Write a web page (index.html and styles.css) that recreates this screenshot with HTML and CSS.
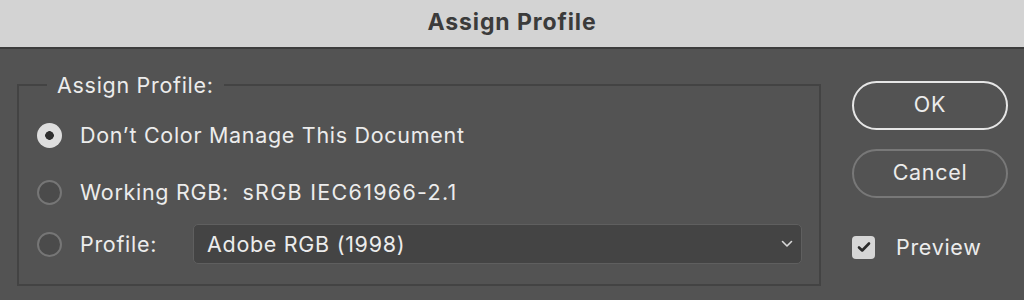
FILE: index.html
```html
<!DOCTYPE html>
<html>
<head>
<meta charset="utf-8">
<link rel="stylesheet" href="styles.css">
</head>
<body>
<div class="titlebar">Assign Profile</div>
<div class="main">
  <fieldset class="group">
    <legend class="legend">Assign Profile:</legend>
    <div class="row row1">
      <span class="radio checked"></span>
      <span class="label">Don’t Color Manage This Document</span>
    </div>
    <div class="row row2">
      <span class="radio"></span>
      <span class="label">Working RGB:&nbsp; <span class="wide">sRGB IEC61966-2.1</span></span>
    </div>
    <div class="row row3">
      <span class="radio"></span>
      <span class="label profile-label">Profile:</span>
      <div class="select">
        <span class="select-text">Adobe RGB (1998)</span>
        <svg class="chev" width="12" height="8" viewBox="0 0 12 8"><path d="M1.5 1.5 L6 6 L10.5 1.5" fill="none" stroke="#d8d8d8" stroke-width="1.6" stroke-linecap="round" stroke-linejoin="round"/></svg>
      </div>
    </div>
  </fieldset>
  <div class="side">
    <div class="btn btn-ok">OK</div>
    <div class="btn btn-cancel">Cancel</div>
    <div class="check-row">
      <span class="checkbox"><svg width="14" height="12" viewBox="0 0 14 12"><path d="M2 6.5 L5.2 9.5 L12 2.5" fill="none" stroke="#2a2a2a" stroke-width="2.6" stroke-linecap="round" stroke-linejoin="round"/></svg></span>
      <span class="label">Preview</span>
    </div>
  </div>
</div>
</body>
</html>
```
FILE: styles.css
```css
html, body {
  margin: 0;
  padding: 0;
}
body {
  width: 1024px;
  height: 300px;
  background: #535353;
  font-family: Inter, "Liberation Sans", Arial, sans-serif;
  color: #ececec;
  overflow: hidden;
}
.titlebar {
  height: 47px;
  line-height: 44px;
  background: #d3d3d3;
  border-bottom: 2px solid #3c3c3c;
  text-align: center;
  font-size: 23px;
  font-weight: 700;
  color: #3b3b3b;
  letter-spacing: 0.9px;
}
.main {
  display: flex;
  align-items: flex-start;
}
.group {
  box-sizing: border-box;
  margin: 25px 0 0 17px;
  width: 804px;
  height: 212px;
  border: 2px solid #434343;
  padding: 0;
  min-width: 0;
}
.legend {
  margin-left: 28px;
  padding: 0 10px;
  font-size: 21.5px;
  line-height: 22px;
  letter-spacing: 0.7px;
  color: #ececec;
}
.row {
  display: flex;
  align-items: center;
  height: 40px;
  padding-left: 18px;
}
.row1 { margin-top: 19px; }
.row2 { margin-top: 17px; }
.row3 { margin-top: 12px; }
.label,
.select-text,
.btn {
  font-size: 21.5px;
  letter-spacing: 0.7px;
}
.wide {
  letter-spacing: 1.3px;
}
.radio {
  box-sizing: border-box;
  width: 25px;
  height: 25px;
  border-radius: 50%;
  border: 2px solid #767676;
  background: #4b4b4b;
  margin-right: 18px;
  flex: none;
}
.radio.checked {
  border: none;
  background: radial-gradient(circle, #2f2f2f 0 4px, #dedede 4.6px);
}
.profile-label {
  width: 113px;
}
.select {
  box-sizing: border-box;
  width: 609px;
  height: 40px;
  background: #444444;
  border: 1.5px solid #5f5f5f;
  border-radius: 5px;
  display: flex;
  align-items: center;
  justify-content: space-between;
  padding: 0 8px 0 13px;
}
.chev {
  display: block;
}
.side {
  margin: 32px 0 0 31px;
  width: 156px;
  display: flex;
  flex-direction: column;
}
.btn {
  box-sizing: border-box;
  height: 49px;
  border-radius: 25px;
  display: flex;
  align-items: center;
  justify-content: center;
  padding-bottom: 3px;
}
.btn-ok {
  border: 2px solid #e6e6e6;
}
.btn-cancel {
  margin-top: 19px;
  border: 2px solid #787878;
}
.check-row {
  display: flex;
  align-items: center;
  margin-top: 36px;
}
.checkbox {
  box-sizing: border-box;
  width: 23px;
  height: 23px;
  border-radius: 4px;
  background: #d6d6d6;
  display: flex;
  align-items: center;
  justify-content: center;
  margin-right: 21px;
}
.checkbox svg { display: block; }
```
